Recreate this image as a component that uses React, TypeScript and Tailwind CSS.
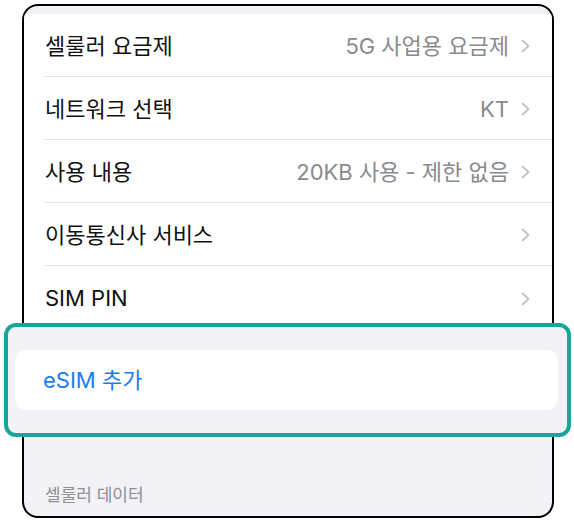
import React from "react";

const FONT = "font-['Inter','Noto_Sans_CJK_KR',sans-serif]";

function Chevron() {
  return (
    <svg width="9" height="14" viewBox="0 0 9 14" className="shrink-0">
      <path d="M1.5 1.5 L7.5 7 L1.5 12.5" fill="none" stroke="#c4c4c7" strokeWidth="1.8" strokeLinecap="round" strokeLinejoin="round" />
    </svg>
  );
}

function Row({ label, value, last }: { label: string; value?: string; last?: boolean }) {
  return (
    <div className="pl-[21px] bg-white">
      <div className={`h-[63px] flex items-center pr-[22px] pt-[2px] ${last ? "" : "border-b border-[#e3e3e6]"}`}>
        <span className="text-[22px] text-[#111]">{label}</span>
        <div className="flex-1" />
        {value && <span className="text-[22px] text-[#8a8a8e] mr-[12px]">{value}</span>}
        <Chevron />
      </div>
    </div>
  );
}

export default function App() {
  return (
    <div className={`relative w-[574px] h-[520px] bg-white ${FONT}`}>
      <div className="pt-[4px] pl-[22px]">
        <div className="w-[532px] h-[514px] border-2 border-black rounded-[16px] overflow-hidden bg-[#f2f2f7] flex flex-col">
          <div className="h-[8px] shrink-0" />
          <Row label="셀룰러 요금제" value="5G 사업용 요금제" />
          <Row label="네트워크 선택" value="KT" />
          <Row label="사용 내용" value="20KB 사용 - 제한 없음" />
          <Row label="이동통신사 서비스" />
          <Row label="SIM PIN" last />
          <div className="flex-1 flex flex-col justify-end pl-[21px] pb-[8px]">
            <span className="text-[17px] text-[#8e8e93]">셀룰러 데이터</span>
          </div>
        </div>
      </div>
      <div className="absolute left-[4px] top-[323px] w-[567px] h-[114px] border-4 border-[#17a69a] rounded-[12px] bg-[#f2f2f7]">
        <div className="ml-[7px] mt-[23px] w-[543px] h-[60px] bg-white rounded-[11px] flex items-center pl-[28px]">
          <span className="text-[22px] text-[#1a7cf4]">eSIM 추가</span>
        </div>
      </div>
    </div>
  );
}
